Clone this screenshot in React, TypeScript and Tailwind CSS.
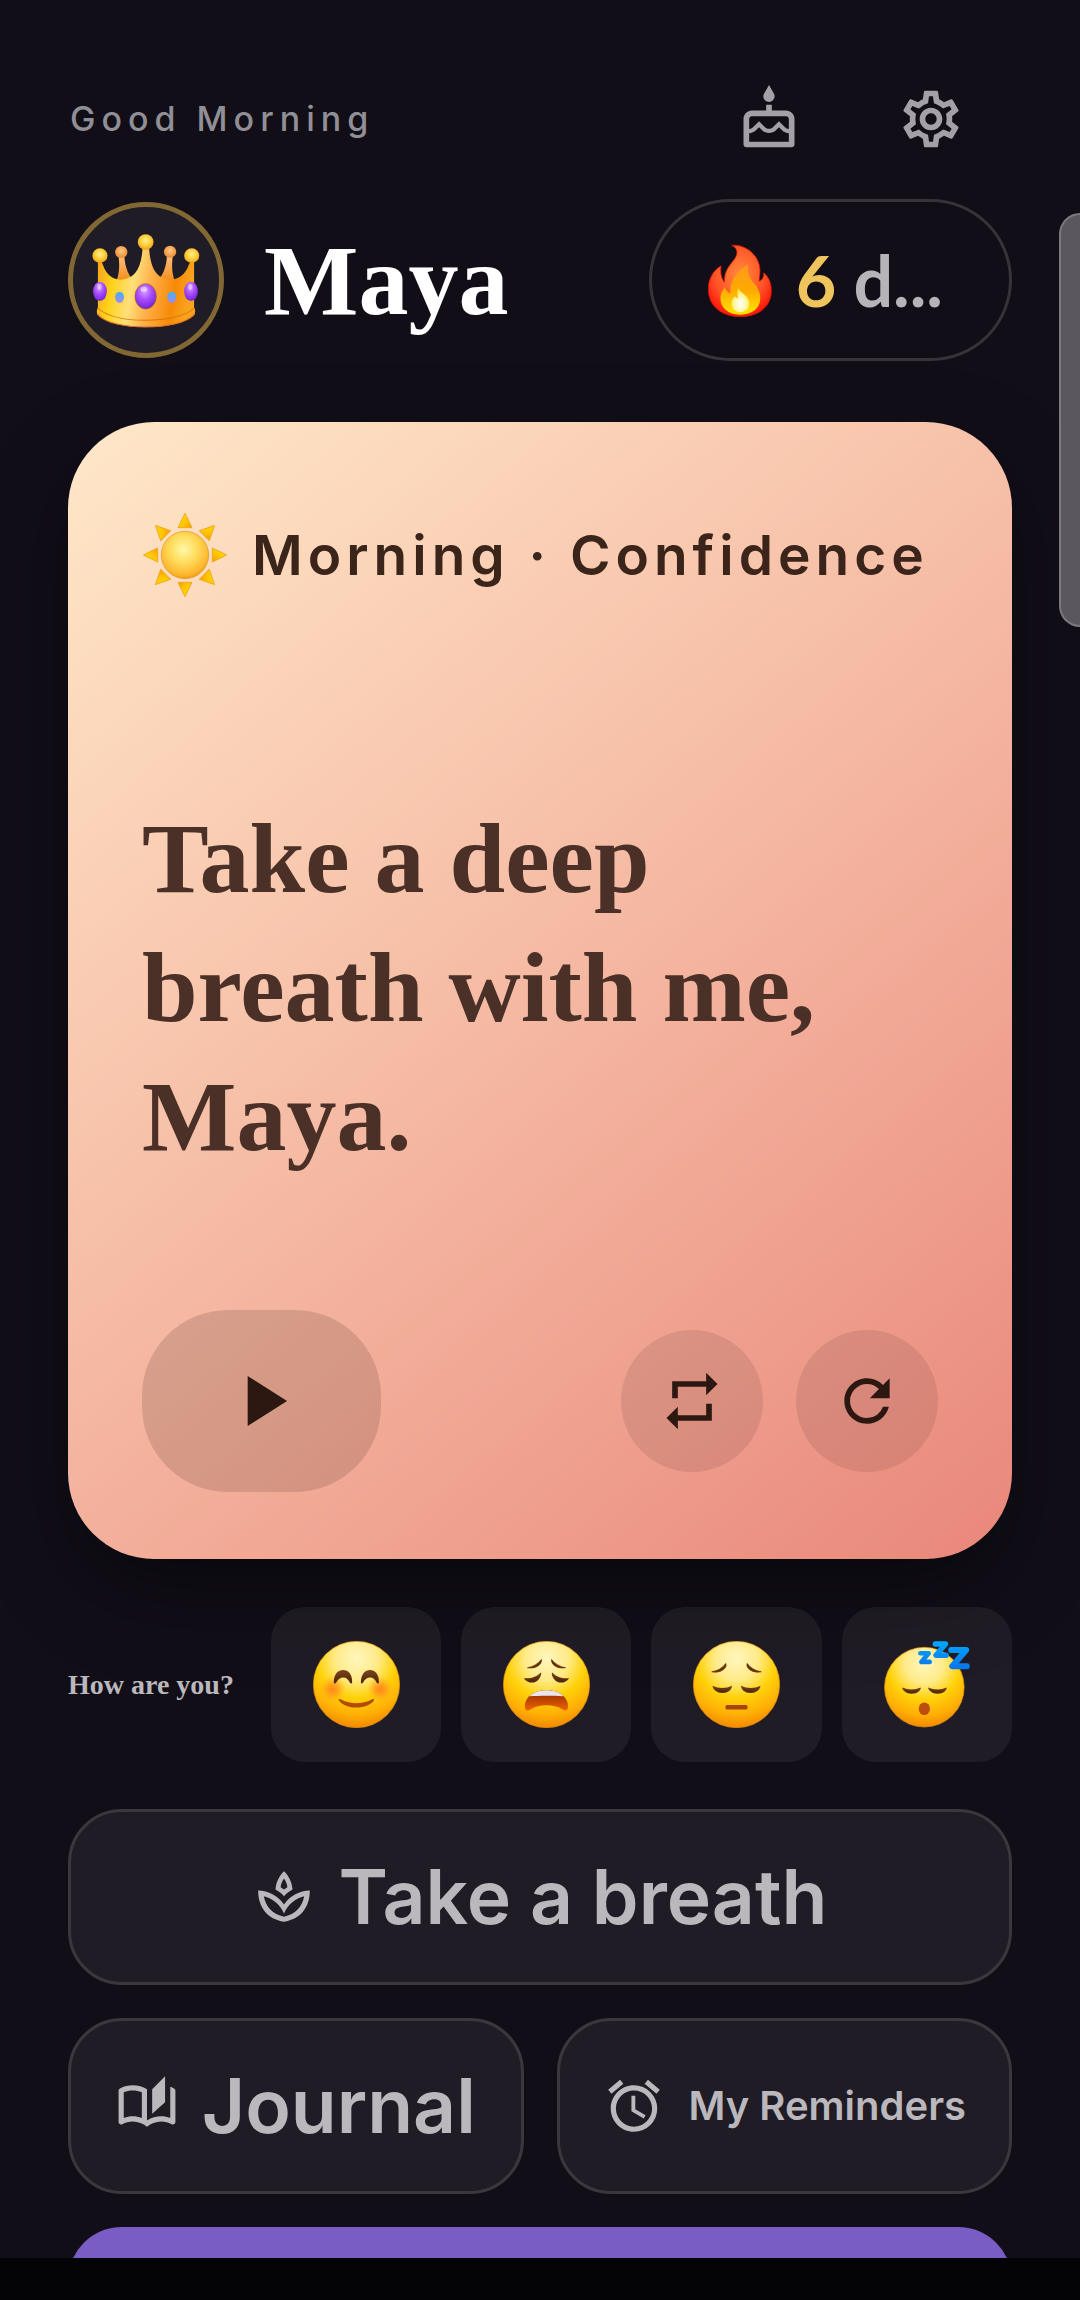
import React, { useState } from "react";
import {
  MdAlarm,
  MdOutlineAutoStories,
  MdOutlineCake,
  MdOutlineSettings,
  MdPlayArrow,
  MdRefresh,
  MdRepeat,
} from "react-icons/md";

function CrownIcon() {
  return (
    <svg
      viewBox="260 538 326 291"
      preserveAspectRatio="none"
      className="w-[112px] h-[97px]"
      aria-hidden="true"
    >
      <defs>
        <linearGradient id="crownBody" x1="0" x2="1" y1="0" y2="0.15">
          <stop offset="0" stopColor="#f59a1e" />
          <stop offset="0.22" stopColor="#ffd21a" />
          <stop offset="0.42" stopColor="#ffe07a" />
          <stop offset="0.6" stopColor="#ffb04a" />
          <stop offset="0.85" stopColor="#f78a08" />
          <stop offset="1" stopColor="#f9a21c" />
        </linearGradient>
        <linearGradient id="crownBack" x1="0" x2="0" y1="0" y2="1">
          <stop offset="0" stopColor="#ffbd7a" />
          <stop offset="1" stopColor="#f08a14" />
        </linearGradient>
        <radialGradient id="crownBall" cx="0.5" cy="0.4" r="0.6">
          <stop offset="0" stopColor="#fff08c" />
          <stop offset="0.6" stopColor="#ffcb35" />
          <stop offset="1" stopColor="#e8a01c" />
        </radialGradient>
        <radialGradient id="crownBackBall" cx="0.5" cy="0.4" r="0.6">
          <stop offset="0" stopColor="#ffc98a" />
          <stop offset="1" stopColor="#e98a2c" />
        </radialGradient>
        <radialGradient id="crownGem" cx="0.45" cy="0.3" r="0.75">
          <stop offset="0" stopColor="#d9a2ff" />
          <stop offset="0.45" stopColor="#a94cff" />
          <stop offset="1" stopColor="#6a1fd0" />
        </radialGradient>
        <linearGradient id="crownDot" x1="0" x2="0" y1="0" y2="1">
          <stop offset="0" stopColor="#3fb4e8" />
          <stop offset="1" stopColor="#a586f5" />
        </linearGradient>
      </defs>
      <path d="M343 610C347 640 345 665 336 688L392 690C372 670 362 645 360 610Z" fill="url(#crownBack)" />
      <path d="M501 610C497 640 499 665 508 688L452 690C472 670 482 645 484 610Z" fill="url(#crownBack)" />
      <circle cx="351" cy="598" r="18" fill="url(#crownBackBall)" />
      <circle cx="493" cy="597" r="18" fill="url(#crownBackBall)" />
      <path
        d="M283 625C291 625 296 629 298 638C306 664 324 680 348 681C388 681 410 650 413 585L432 585C435 650 456 681 496 681C521 680 539 662 547 638C549 629 555 625 563 625L563 765C568 770 566 780 564 786C540 812 480 823 422 823C364 823 305 812 282 786C279 780 279 771 283 765Z"
        fill="url(#crownBody)"
      />
      <path d="M282 766C310 792 365 803 422 803C480 803 538 791 564 766" fill="none" stroke="#d87908" strokeWidth="3" />
      <path d="M282 785C305 812 364 823 422 823C480 823 540 812 564 785" fill="none" stroke="#e06f2c" strokeWidth="3" />
      <circle cx="289" cy="609" r="22" fill="url(#crownBall)" />
      <circle cx="422" cy="568" r="23" fill="url(#crownBall)" />
      <circle cx="556" cy="609" r="22" fill="url(#crownBall)" />
      <ellipse cx="289" cy="716" rx="20" ry="29" fill="url(#crownGem)" />
      <ellipse cx="554" cy="716" rx="20" ry="29" fill="url(#crownGem)" />
      <ellipse cx="422" cy="731" rx="31" ry="38" fill="url(#crownGem)" stroke="#a45a10" strokeWidth="2" />
      <ellipse cx="346" cy="734" rx="13" ry="17" fill="url(#crownDot)" />
      <ellipse cx="498" cy="734" rx="13" ry="17" fill="url(#crownDot)" />
      <ellipse cx="417" cy="710" rx="10" ry="8" fill="#fff" opacity="0.5" />
      <ellipse cx="287" cy="702" rx="6" ry="9" fill="#fff" opacity="0.4" />
      <ellipse cx="552" cy="702" rx="6" ry="9" fill="#fff" opacity="0.4" />
    </svg>
  );
}

function FireIcon() {
  return (
    <svg
      viewBox="504 584 186 220"
      preserveAspectRatio="none"
      className="w-[64px] h-[73px] shrink-0"
      aria-hidden="true"
    >
      <defs>
        <radialGradient id="fireOuter" cx="0.5" cy="0.4" r="0.62">
          <stop offset="0" stopColor="#ff8a3c" />
          <stop offset="0.65" stopColor="#ff5226" />
          <stop offset="1" stopColor="#fb1608" />
        </radialGradient>
        <linearGradient id="fireMiddle" x1="0" x2="0" y1="0" y2="1">
          <stop offset="0" stopColor="#ff9a1e" />
          <stop offset="0.5" stopColor="#ffa800" />
          <stop offset="1" stopColor="#ffe600" />
        </linearGradient>
        <radialGradient id="fireCore" cx="0.5" cy="0.65" r="0.6">
          <stop offset="0" stopColor="#ffffff" />
          <stop offset="0.5" stopColor="#fff9b0" />
          <stop offset="1" stopColor="#ffe62e" />
        </radialGradient>
      </defs>
      <path
        d="M573 588C612 584 652 616 655 660C656 675 652 686 653 696C661 694 667 684 666 671C680 682 689 704 688 727C687 775 648 803 598 803C546 803 506 773 505 722C504 692 518 663 542 650C539 668 542 688 552 700C549 665 570 646 582 628C592 612 590 596 573 588Z"
        fill="url(#fireOuter)"
        stroke="#f01405"
        strokeWidth="2"
      />
      <path
        d="M621 645C618 668 622 684 636 700C649 714 656 730 656 747C656 778 632 797 598 797C563 797 540 777 540 747C540 735 545 723 553 714C556 722 560 730 570 733C563 700 590 664 621 645Z"
        fill="url(#fireMiddle)"
      />
      <path
        d="M592 716C596 733 624 737 624 764C624 780 613 789 598 789C583 789 572 779 572 764C572 753 577 745 583 742C586 746 588 747 592 748C589 736 588 725 592 716Z"
        fill="url(#fireCore)"
      />
    </svg>
  );
}

const RAYS = [0, 45, 90, 135, 180, 225, 270, 315];

function SunIcon() {
  return (
    <svg viewBox="-129 -129 258 258" className="w-[86px] h-[86px] shrink-0" aria-hidden="true">
      <defs>
        <radialGradient id="sunDisc" cx="0.47" cy="0.38" r="0.64">
          <stop offset="0" stopColor="#fff8a8" />
          <stop offset="0.45" stopColor="#ffdc5c" />
          <stop offset="0.85" stopColor="#fdb52c" />
          <stop offset="1" stopColor="#e8960f" />
        </radialGradient>
        <linearGradient id="sunRay" x1="0" x2="1" y1="0" y2="1">
          <stop offset="0" stopColor="#ffe600" />
          <stop offset="0.6" stopColor="#ffc400" />
          <stop offset="1" stopColor="#f59a0a" />
        </linearGradient>
      </defs>
      {RAYS.map((angle) => (
        <path
          key={angle}
          d="M0 -125L21 -82H-21Z"
          transform={`rotate(${angle})`}
          fill="url(#sunRay)"
          stroke="#efac1c"
          strokeWidth="3"
          strokeLinejoin="round"
        />
      ))}
      <circle r="71" fill="url(#sunDisc)" stroke="#dd9420" strokeWidth="2" />
    </svg>
  );
}

function SpaIcon() {
  return (
    <svg
      viewBox="0 0 24 24"
      fill="currentColor"
      fillRule="evenodd"
      className="w-[62px] h-[62px] shrink-0"
      aria-hidden="true"
    >
      <path d="M12 2C13.9 3.8 15.1 6.3 15.3 9.1C14 9.8 12.9 10.7 12 11.7C11.1 10.7 10 9.8 8.7 9.1C8.9 6.3 10.1 3.8 12 2ZM12 4.8C11.2 6 10.8 7 10.7 8.2L12 9.1L13.3 8.2C13.2 7 12.8 6 12 4.8Z" />
      <path d="M2 9.5C6 9.6 9.6 11.4 12 14.9C14.4 11.4 18 9.6 22 9.5C22 16 18.4 20.6 12 21.6C5.6 20.6 2 16 2 9.5ZM4.2 11.7C4.9 15.7 7.6 18.7 12 19.6C16.4 18.7 19.1 15.7 19.8 11.7C16.5 12.5 13.5 14.8 12 18.4C10.5 14.8 7.5 12.5 4.2 11.7Z" />
    </svg>
  );
}

function FaceDefs() {
  return (
    <svg className="absolute w-0 h-0" aria-hidden="true">
      <defs>
        <radialGradient id="faceFill" cx="0.5" cy="0.2" r="0.82">
          <stop offset="0" stopColor="#fff6bd" />
          <stop offset="0.3" stopColor="#ffeb8a" />
          <stop offset="0.55" stopColor="#ffd20a" />
          <stop offset="0.8" stopColor="#ffae05" />
          <stop offset="1" stopColor="#f08400" />
        </radialGradient>
        <linearGradient id="faceEye" x1="0" x2="0" y1="0" y2="1">
          <stop offset="0" stopColor="#7a4420" />
          <stop offset="1" stopColor="#4a2406" />
        </linearGradient>
        <linearGradient id="faceMouth" x1="0" x2="0" y1="0" y2="1">
          <stop offset="0" stopColor="#8f2a00" />
          <stop offset="1" stopColor="#ee6200" />
        </linearGradient>
        <radialGradient id="faceCheek">
          <stop offset="0" stopColor="#ff7a1e" stopOpacity="0.85" />
          <stop offset="0.4" stopColor="#ff8a1e" stopOpacity="0.65" />
          <stop offset="1" stopColor="#ffae1e" stopOpacity="0" />
        </radialGradient>
        <linearGradient id="sleepBlue" gradientUnits="userSpaceOnUse" x1="0" x2="0" y1="0" y2="84">
          <stop offset="0" stopColor="#00a8ff" />
          <stop offset="1" stopColor="#0a74ea" />
        </linearGradient>
      </defs>
    </svg>
  );
}

function HappyFace() {
  return (
    <svg viewBox="0 0 260 260" className="w-[87px] h-[87px]" aria-hidden="true">
      <circle cx="130" cy="130" r="129" fill="url(#faceFill)" stroke="#e89010" strokeWidth="2" />
      <circle cx="59" cy="144" r="40" fill="url(#faceCheek)" />
      <circle cx="201" cy="144" r="40" fill="url(#faceCheek)" />
      <path d="M62 122C63 98 76 87 90 87C106 87 117 100 117 122C117 128 113 129 110 124C105 113 99 109 91 109C82 109 75 114 70 123C66 129 62 128 62 122Z" fill="url(#faceEye)" />
      <path d="M143 122C144 98 157 87 170 87C186 87 197 100 197 122C197 128 193 129 190 124C185 113 179 109 171 109C162 109 155 114 150 123C147 129 143 128 143 122Z" fill="url(#faceEye)" />
      <path d="M77 177C76 173 80 172 84 175C112 190 147 190 176 175C180 172 184 174 182 178C172 192 152 199 130 199C108 199 87 192 77 177Z" fill="#b34a05" />
    </svg>
  );
}

function WearyFace() {
  return (
    <svg viewBox="0 0 260 260" className="w-[87px] h-[87px]" aria-hidden="true">
      <circle cx="130" cy="130" r="129" fill="url(#faceFill)" stroke="#e89010" strokeWidth="2" />
      <path d="M73 80C90 77 105 68 115 55C117 70 99 84 73 80Z" fill="#633008" stroke="#633008" strokeWidth="2" />
      <path d="M187 80C170 77 155 68 145 55C143 70 161 84 187 80Z" fill="#633008" stroke="#633008" strokeWidth="2" />
      <path d="M62 111C82 114 101 107 113 94C116 96 113 107 107 114C97 127 75 129 62 111Z" fill="url(#faceEye)" />
      <path d="M198 111C178 114 159 107 147 94C144 96 147 107 153 114C163 127 185 129 198 111Z" fill="url(#faceEye)" />
      <path d="M66 200C62 170 90 147 130 147C170 147 198 170 194 200C192 209 184 209 177 204C163 195 148 192 130 192C112 192 97 195 83 204C76 209 68 209 66 200Z" fill="url(#faceMouth)" />
      <path d="M79 165C91 153 109 147 130 147C151 147 169 153 181 165C150 163 110 163 79 165Z" fill="#e9e6ee" />
    </svg>
  );
}

function PensiveFace() {
  return (
    <svg viewBox="0 0 260 260" className="w-[87px] h-[87px]" aria-hidden="true">
      <circle cx="130" cy="130" r="129" fill="url(#faceFill)" stroke="#e89010" strokeWidth="2" />
      <path d="M56 92C74 89 88 81 98 67C104 80 82 98 56 92Z" fill="#633008" stroke="#633008" strokeWidth="2" />
      <path d="M204 92C186 89 172 81 162 67C156 80 178 98 204 92Z" fill="#633008" stroke="#633008" strokeWidth="2" />
      <path d="M59 134C76 143 98 143 116 134C118 136 114 144 110 148C98 158 78 158 66 148C61 144 57 136 59 134Z" fill="url(#faceEye)" />
      <path d="M144 134C162 143 184 143 201 134C203 136 199 144 194 148C182 158 162 158 150 148C146 144 142 136 144 134Z" fill="url(#faceEye)" />
      <rect x="97" y="191" width="66" height="14" rx="5" fill="#a84210" />
    </svg>
  );
}

function SleepyFace() {
  return (
    <svg viewBox="0 0 258 262" className="w-[86px] h-[87px]" aria-hidden="true">
      <circle cx="121" cy="139" r="120" fill="url(#faceFill)" stroke="#e89010" strokeWidth="2" />
      <path d="M55 140C72 148 93 148 110 140C112 142 108 149 104 152C93 161 73 161 62 152C57 149 53 142 55 140Z" fill="url(#faceEye)" />
      <path d="M133 140C150 148 171 148 188 140C190 142 186 149 182 152C171 161 151 161 140 152C135 149 131 142 133 140Z" fill="url(#faceEye)" />
      <ellipse cx="121" cy="204" rx="17" ry="19" fill="#bc4d0c" />
      <g fill="none" stroke="url(#sleepBlue)" strokeLinejoin="round" strokeLinecap="round">
        <path d="M109 37H134L112 63H137" strokeWidth="14" />
        <path d="M154 9H185L156 43H187" strokeWidth="16" />
        <path d="M202 27H247L205 76H249" strokeWidth="18" />
      </g>
    </svg>
  );
}

const moods = [
  { name: "Happy", Face: HappyFace },
  { name: "Stressed", Face: WearyFace },
  { name: "Sad", Face: PensiveFace },
  { name: "Tired", Face: SleepyFace },
];

const sans = "font-['Inter','Open_Sans',sans-serif]";
const serif = "font-['Liberation_Serif',serif]";
const tile =
  "flex items-center justify-center gap-[24px] h-[176px] rounded-[54px] border-3 border-[#3a373e] bg-[#1f1c25] text-[#bab8bc]";

export default function App() {
  const [mood, setMood] = useState<string | null>(null);
  const [repeat, setRepeat] = useState(false);

  return (
    <div className={`relative flex flex-col h-screen bg-[#110e18] overflow-hidden ${sans}`}>
      <FaceDefs />
      <main className="flex-1 min-h-0 overflow-hidden px-[68px] pt-[85px]">
        <header>
          <div className="flex items-center justify-between">
            <p className="pl-0.5 text-[34px] leading-[68px] font-medium tracking-[6px] text-[#918f96]">
              Good Morning
            </p>
            <div className="flex items-center text-[#a3a1a7]">
              <button type="button" aria-label="Birthday" className="flex justify-center w-[162px]">
                <MdOutlineCake size={68} />
              </button>
              <button type="button" aria-label="Settings" className="flex justify-center w-[162px]">
                <MdOutlineSettings size={68} />
              </button>
            </div>
          </div>

          <div className="flex items-center justify-between mt-[46px]">
            <div className="flex items-center gap-[40px]">
              <div className="flex items-center justify-center w-[156px] h-[156px] rounded-full border-5 border-[#806734] bg-[#1f1c25]">
                <CrownIcon />
              </div>
              <h1 className={`text-[100px] leading-[129px] font-bold text-white ${serif}`}>Maya</h1>
            </div>
            <div className="flex items-center gap-[24px] h-[162px] pl-[56px] pr-[66px] rounded-full border-3 border-[#36333a]">
              <FireIcon />
              <p className="font-['Lato',sans-serif] text-[70px] leading-[84px] font-bold text-[#b6b4b8] whitespace-nowrap">
                <span className="text-[#f0c45c]">6</span> d...
              </p>
            </div>
          </div>
        </header>

        <section className="mt-[61px] px-[74px] pt-[90px] pb-[67px] rounded-[86px] bg-[linear-gradient(140deg,#ffe8c9,#f5b8a2_51%,#e9877a)] shadow-[0_34px_84px_rgba(0,0,0,0.4)]">
          <div className="flex items-center gap-[24px]">
            <SunIcon />
            <h2 className="text-[55px] leading-[84px] font-semibold tracking-[5px] text-[#3b2419] whitespace-nowrap">
              Morning · Confidence
            </h2>
          </div>

          <p className={`mt-[196px] text-[100px] leading-[129px] font-bold text-[#4a3026] ${serif}`}>
            Take a deep
            <br />
            breath with me,
            <br />
            Maya.
          </p>

          <div className="flex items-center justify-between mt-[129px] text-[#2c1810]">
            <button
              type="button"
              aria-label="Play"
              className="flex items-center justify-center w-[239px] h-[182px] rounded-[86px] bg-[#2c1810]/15"
            >
              <MdPlayArrow size={86} />
            </button>
            <div className="flex items-center gap-[33px]">
              <button
                type="button"
                aria-label="Repeat"
                aria-pressed={repeat}
                onClick={() => setRepeat(!repeat)}
                className="flex items-center justify-center w-[142px] h-[142px] rounded-full bg-[#2c1810]/10"
              >
                <MdRepeat size={68} />
              </button>
              <button
                type="button"
                aria-label="New affirmation"
                className="flex items-center justify-center w-[142px] h-[142px] rounded-full bg-[#2c1810]/10"
              >
                <MdRefresh size={68} />
              </button>
            </div>
          </div>
        </section>

        <section className="flex items-center gap-[37px] mt-[48px]">
          <h3 className={`text-[28px] leading-[34px] font-bold text-[#bab8bc] whitespace-nowrap ${serif}`}>
            How are you?
          </h3>
          <div className="flex flex-1 gap-[20px]">
            {moods.map(({ name, Face }) => (
              <button
                key={name}
                type="button"
                aria-label={name}
                aria-pressed={mood === name}
                onClick={() => setMood(name)}
                className="flex flex-1 items-center justify-center h-[155px] rounded-[34px] bg-white/6"
              >
                <Face />
              </button>
            ))}
          </div>
        </section>

        <nav className="grid grid-cols-2 gap-[33px] mt-[47px]">
          <button type="button" className={`col-span-2 ${tile}`}>
            <SpaIcon />
            <span className="text-[75px] leading-[84px] font-semibold">Take a breath</span>
          </button>
          <button type="button" className={tile}>
            <MdOutlineAutoStories size={62} />
            <span className="text-[75px] leading-[84px] font-semibold">Journal</span>
          </button>
          <button type="button" className={tile}>
            <MdAlarm size={62} />
            <span className="text-[40px] leading-[84px] font-semibold whitespace-nowrap">My Reminders</span>
          </button>
          <button
            type="button"
            aria-label="Continue"
            className="col-span-2 h-[176px] rounded-[54px] bg-[#7a5cc5]"
          />
        </nav>
      </main>

      {/* edge panel handle */}
      <div className="absolute right-0 top-[213px] w-[21px] h-[414px] rounded-l-[22px] border-2 border-r-0 border-[#7c7a80] bg-[#5a585e]" />
      <div className="h-[42px] shrink-0 bg-[#040406]" />
    </div>
  );
}
